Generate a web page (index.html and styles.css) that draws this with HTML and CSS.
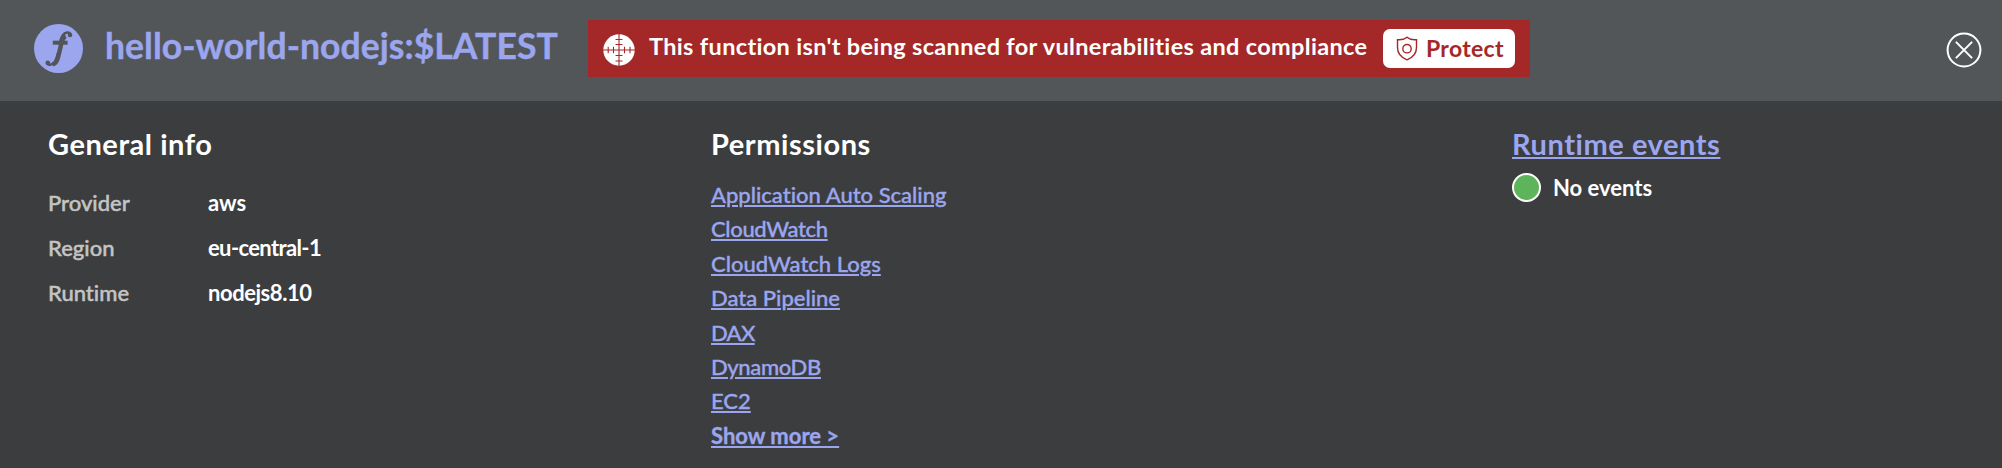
FILE: index.html
```html
<!DOCTYPE html>
<html lang="en">
<head>
<meta charset="utf-8">
<title>hello-world-nodejs:$LATEST</title>
<link rel="stylesheet" href="styles.css">
</head>
<body>
<header class="header">
  <svg class="fn-icon" viewBox="0 0 49 49" aria-hidden="true">
    <circle class="fn-disc" cx="24.5" cy="24.5" r="24.5"/>
    <path class="fn-stem" d="M31.6 12 C28.8 13.5 27.8 17 27 21 L24 33.5 C23 37.5 21.5 39.8 18.8 40.2"/>
    <path class="fn-hook" d="M36.5 10.6 C35.5 7.3 31 8 28.7 11.5 C26.8 14.3 26 18 25.5 21"/>
    <path class="fn-hook" d="M12.8 38.5 C13.8 42 18.3 41.2 20.8 38 C22.6 35.5 23.3 32 24 29"/>
    <path class="fn-bar" d="M18.8 18.7 H33.6"/>
    <circle class="fn-dot" cx="36" cy="11" r="2.3"/>
    <circle class="fn-dot" cx="13.8" cy="38.8" r="2.3"/>
  </svg>
  <h1 class="title">hello-world-nodejs:$LATEST</h1>
  <div class="banner">
    <svg class="scope" viewBox="0 0 32 32" aria-hidden="true">
      <circle cx="16" cy="16" r="15.7" fill="#fff"/>
      <path class="scope-line" d="M16 0 V32 M0 16 H32 M12.5 5.5 H19.5 M12.5 10.5 H19.5 M12.5 21.5 H19.5 M12.5 27 H19.5 M5.2 12.7 V19.3 M10.5 12.7 V19.3 M21.5 12.7 V19.3 M27 12.7 V19.3"/>
    </svg>
    <span class="message">This function isn't being scanned for vulnerabilities and compliance</span>
    <button class="protect" type="button">
      <svg class="shield" viewBox="0 0 22 25" aria-hidden="true">
        <path d="M11 1.2 C8.3 3.6 4.8 4 1.5 3.7 V11.5 C1.5 17.5 5 21.5 11 23.8 C17 21.5 20.5 17.5 20.5 11.5 V3.7 C17.2 4 13.7 3.6 11 1.2 Z"/>
        <circle cx="11" cy="12.7" r="4.2"/>
      </svg>
      <span>Protect</span>
    </button>
  </div>
  <svg class="close" viewBox="0 0 36 36" role="img" aria-label="Close">
    <circle cx="18" cy="18" r="16.4"/>
    <path d="M10.4 10.4 L25.6 25.6 M25.6 10.4 L10.4 25.6"/>
  </svg>
</header>
<main class="content">
  <section class="col">
    <h2 class="heading">General info</h2>
    <dl class="info">
      <dt>Provider</dt><dd>aws</dd>
      <dt>Region</dt><dd class="region">eu-central-1</dd>
      <dt>Runtime</dt><dd class="runtime">nodejs8.10</dd>
    </dl>
  </section>
  <section class="col">
    <h2 class="heading">Permissions</h2>
    <ul class="links">
      <li><a>Application Auto Scaling</a></li>
      <li><a class="snug">CloudWatch</a></li>
      <li><a>CloudWatch Logs</a></li>
      <li><a>Data Pipeline</a></li>
      <li><a class="tight">DAX</a></li>
      <li><a class="snug">DynamoDB</a></li>
      <li><a>EC2</a></li>
      <li><a class="more">Show more &gt;</a></li>
    </ul>
  </section>
  <section class="col">
    <h2 class="heading heading-link">Runtime events</h2>
    <div class="status"><span class="dot"></span><span class="status-text">No events</span></div>
  </section>
</main>
</body>
</html>
```
FILE: styles.css
```css
* { box-sizing: border-box; }

body {
  margin: 0;
  min-height: 468px;
  background: #3c3d3f;
  color: #fff;
  font: 22px/36px Lato, "Open Sans", sans-serif;
  font-variant-ligatures: none;
}

h1, h2, dl, dd, ul { margin: 0; padding: 0; }

.header {
  display: flex;
  align-items: flex-start;
  height: 101px;
  padding: 20px 20px 0 34px;
  background: #525658;
}

.fn-icon { width: 49px; height: 49px; margin-top: 4px; }
.fn-disc { fill: #9ba6ee; }
.fn-stem, .fn-hook, .fn-bar { fill: none; stroke: #525658; }
.fn-stem { stroke-width: 4.4; }
.fn-hook { stroke-width: 2.6; }
.fn-bar { stroke-width: 4; }
.fn-dot { fill: #525658; }

.title {
  width: 483px;
  margin: 4px 0 0 22px;
  color: #9ba6ee;
  font-size: 35.5px;
  line-height: 44px;
  font-weight: 700;
  letter-spacing: .06px;
  white-space: nowrap;
  -webkit-text-stroke: .4px;
}

.banner {
  display: flex;
  align-items: flex-start;
  width: 942px;
  height: 57px;
  padding: 9px 15px 0;
  background: #a52828;
}

.scope { width: 32px; height: 32px; margin-top: 5px; }
.scope-line { stroke: #a52828; stroke-width: 1.1; }

.message {
  width: 734px;
  margin: 2px 0 0 14px;
  font-size: 23.5px;
  line-height: 30px;
  font-weight: 700;
  letter-spacing: .33px;
  white-space: nowrap;
}

.protect {
  display: flex;
  align-items: center;
  width: 132px;
  height: 39px;
  padding: 0 0 2px 13px;
  border: 0;
  border-radius: 7px;
  background: #fff;
  color: #a52828;
  font: 700 23px/28px Lato, sans-serif;
  font-variant-ligatures: none;
  letter-spacing: .3px;
}

.shield {
  width: 22px;
  height: 25px;
  margin: 2px 8px 0 0;
  fill: none;
  stroke: #a52828;
  stroke-width: 1.4;
}

.close {
  width: 36px;
  height: 36px;
  margin: 12px 0 0 auto;
  fill: none;
  stroke: #fff;
  stroke-width: 2;
  stroke-linecap: round;
}

.content {
  display: grid;
  grid-template-columns: 663px 801px 1fr;
  padding: 25px 0 0 48px;
}

.heading {
  font-size: 29px;
  line-height: 36px;
  font-weight: 700;
  letter-spacing: .55px;
}

.heading-link {
  width: max-content;
  color: #9ba6ee;
  text-decoration: underline;
  text-decoration-thickness: 2px;
  text-underline-offset: 2px;
}

.info {
  display: grid;
  grid-template-columns: 160px auto;
  margin-top: 18px;
  line-height: 45px;
}

.info dt { color: #c4c4c4; font-weight: 500; -webkit-text-stroke: .45px; }
.info dd { font-weight: 700; }
.info .region { letter-spacing: -.63px; }
.info .runtime { letter-spacing: -.45px; }

.links {
  margin-top: 16px;
  list-style: none;
  line-height: 34.4px;
}

.links a {
  color: #9ba6ee;
  font-weight: 500;
  text-decoration: underline;
  text-decoration-thickness: 1.5px;
  text-underline-offset: 2px;
  -webkit-text-stroke: .35px;
}

.links .snug { letter-spacing: -.35px; }
.links .tight { letter-spacing: -.67px; }
.links .more { font-weight: 700; }

.status {
  display: flex;
  align-items: center;
  margin-top: 8px;
  font-weight: 700;
}

.dot {
  width: 29px;
  height: 29px;
  margin: 0 12px 1px 0;
  border: 2px solid #fff;
  border-radius: 50%;
  background: #5eb45a;
}
```
